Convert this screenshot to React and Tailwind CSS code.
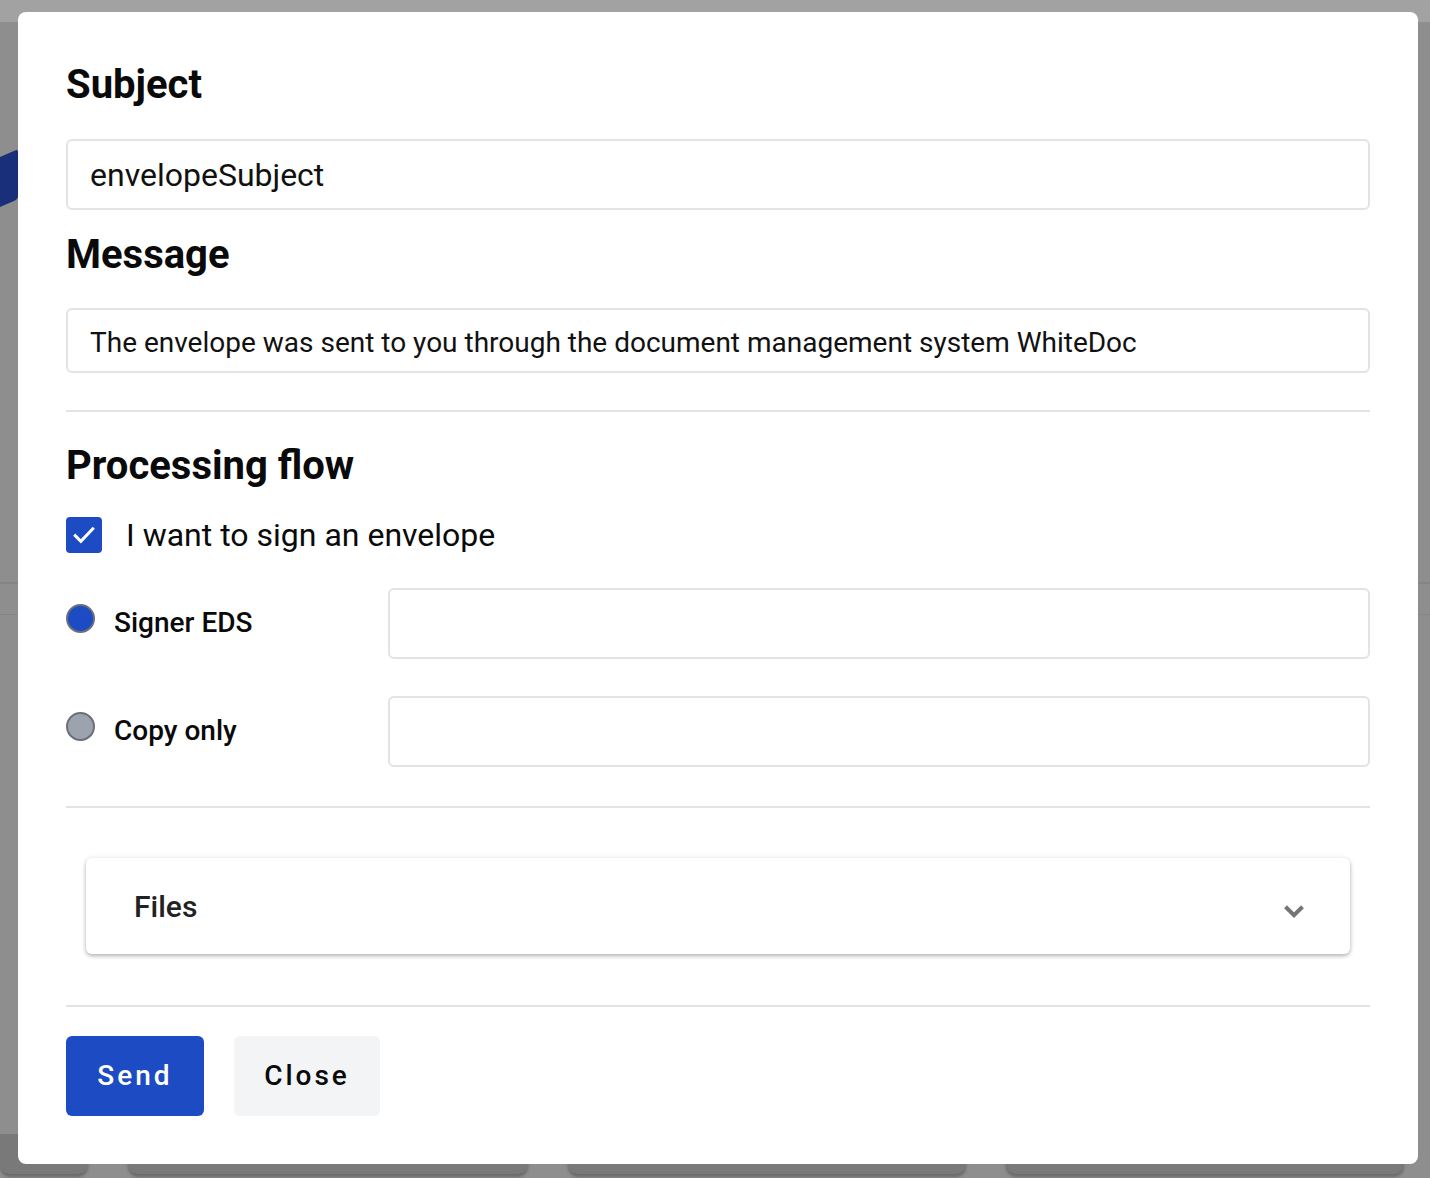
import React from 'react';

const inputCls =
  'w-full rounded-[6px] border-2 border-[#e3e3e3] bg-white px-[22px] text-[#111] outline-none';

const Divider = () => <div className="h-[2px] w-full bg-[#e3e3e3]" />;

const RecipientRow = ({ label, active }) => (
  <div className="flex items-start">
    <div className="flex w-[322px] items-center pt-[4px]">
      <span
        className={`h-[29px] w-[29px] rounded-full border-2 border-[#6b6f78] ${
          active ? 'bg-[#1d4bc4]' : 'bg-[#9ca3af]'
        }`}
      />
      <span className="ml-[19px] mt-[10px] text-[28px] font-medium text-[#0a0a0a]">{label}</span>
    </div>
    <input className={`${inputCls} h-[71px] flex-1 text-[28px]`} />
  </div>
);

export default function App() {
  return (
    <div
      className="relative h-[1178px] w-full overflow-hidden bg-[#8e8e8e]"
      style={{ fontFamily: 'Roboto, "Liberation Sans", sans-serif' }}
    >
      {/* dimmed page behind the dialog */}
      <div className="h-[22px] w-full bg-[#a2a2a2]" />
      <div className="flex h-[560px] w-full">
        <div className="relative w-[18px]">
          <div className="absolute left-[-4px] top-[132px] h-[50px] w-[22px] -skew-y-[24deg] rounded-[3px] bg-[#1a2f7a]" />
        </div>
      </div>
      <div className="h-[2px] w-full bg-[#858585]" />
      <div className="h-[30px] w-full" />
      <div className="h-[1px] w-full bg-[#868686]" />
      <div className="absolute bottom-[4px] left-0 flex w-full gap-[40px] pl-0">
        <div className="h-[40px] w-[88px] rounded-b-[10px] bg-[#797979] shadow-[0_3px_3px_rgba(0,0,0,0.25)]" />
        <div className="h-[40px] w-[400px] rounded-b-[10px] bg-[#797979] shadow-[0_3px_3px_rgba(0,0,0,0.25)]" />
        <div className="h-[40px] w-[398px] rounded-b-[10px] bg-[#797979] shadow-[0_3px_3px_rgba(0,0,0,0.25)]" />
        <div className="h-[40px] w-[398px] rounded-b-[10px] bg-[#797979] shadow-[0_3px_3px_rgba(0,0,0,0.25)]" />
      </div>

      {/* dialog */}
      <div className="absolute left-[18px] top-[12px] flex h-[1152px] w-[1400px] flex-col rounded-[8px] bg-white px-[48px] pt-[49px]">
        <h2 className="text-[40px] font-bold leading-[48px] text-[#0a0a0a]">Subject</h2>
        <input
          className={`${inputCls} mt-[30px] h-[71px] text-[32px]`}
          defaultValue="envelopeSubject"
        />
        <h2 className="mt-[21px] text-[40px] font-bold leading-[48px] text-[#0a0a0a]">Message</h2>
        <input
          className={`${inputCls} mt-[29px] h-[65px] pt-[3px] text-[28px]`}
          defaultValue="The envelope was sent to you through the document management system WhiteDoc"
        />
        <div className="mt-[37px]">
          <Divider />
        </div>
        <h2 className="mt-[30px] text-[40px] font-bold leading-[48px] text-[#0a0a0a]">Processing flow</h2>
        <label className="mt-[21px] flex items-center">
          <span className="flex h-[36px] w-[36px] items-center justify-center rounded-[4px] bg-[#1d4bc4]">
            <svg viewBox="0 0 24 24" className="h-[30px] w-[30px]" fill="none" stroke="white" strokeWidth="2.4" strokeLinecap="square">
              <path d="M5 12.5l4.5 4.5L19 7" />
            </svg>
          </span>
          <span className="ml-[24px] text-[32px] text-[#0a0a0a]">I want to sign an envelope</span>
        </label>
        <div className="mt-[29px] flex flex-col gap-[37px]">
          <RecipientRow label="Signer EDS" active />
          <RecipientRow label="Copy only" />
        </div>
        <div className="mt-[39px]">
          <Divider />
        </div>
        <div className="mx-[20px] mt-[50px] flex h-[96px] items-center justify-between rounded-[6px] bg-white pl-[48px] pr-[39px] shadow-[0_2px_4px_rgba(0,0,0,0.28),0_0_6px_rgba(0,0,0,0.06)]">
          <span className="text-[30px] font-medium text-[#222]">Files</span>
          <svg viewBox="0 0 24 24" className="mt-[10px] h-[34px] w-[34px]" fill="none" stroke="#757575" strokeWidth="2.8">
            <path d="M6 9l6 6 6-6" />
          </svg>
        </div>
        <div className="mt-[51px]">
          <Divider />
        </div>
        <div className="mt-[29px] flex gap-[30px]">
          <button className="h-[80px] w-[138px] rounded-[6px] bg-[#1d4bc4] text-[28px] font-medium tracking-[3px] text-white">
            Send
          </button>
          <button className="h-[80px] w-[146px] rounded-[6px] bg-[#f3f4f6] text-[28px] font-medium tracking-[3px] text-[#0a0a0a]">
            Close
          </button>
        </div>
      </div>
    </div>
  );
}
